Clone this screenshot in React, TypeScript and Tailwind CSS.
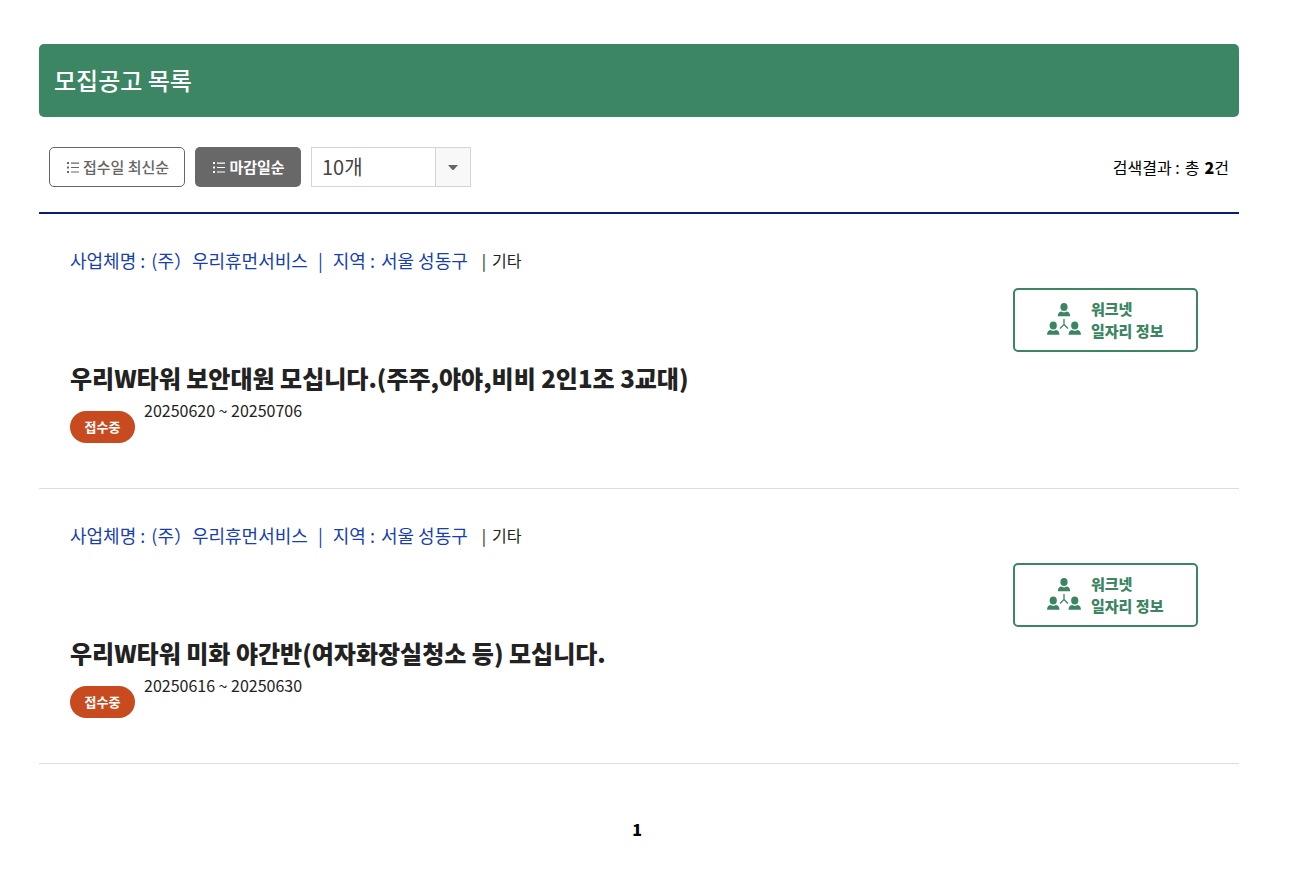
const font = "font-['Noto_Sans_CJK_KR',sans-serif]";

const jobs = [
  { title: "우리W타워 보안대원 모십니다.(주주,야야,비비 2인1조 3교대)", period: "20250620 ~ 20250706" },
  { title: "우리W타워 미화 야간반(여자화장실청소 등) 모십니다.", period: "20250616 ~ 20250630" },
];

function ListIcon() {
  return (
    <svg width="12" height="11" viewBox="0 0 12 11" fill="currentColor" aria-hidden="true">
      <path d="M0 0h2v2H0zM4 .5h8v1.200H4zM0 4.500h2v2H0zM4 4.900h8v1.200H4zM0 9h2v2H0zM4 9.400h8v1.200H4z" />
    </svg>
  );
}

function Person({ x, y }: { x: number; y: number }) {
  return (
    <g transform={`translate(${x} ${y})`}>
      <ellipse cx="6.250" cy="4" rx="3.600" ry="4" />
      <path d="M0 13.300c.2-2.800 1-4.300 3.500-4.800l2.750 1.100L9 8.500c2.500.5 3.300 2 3.500 4.800z" />
    </g>
  );
}

function NetworkIcon() {
  return (
    <svg width="34" height="34" viewBox="0 0 34 34" fill="#3b8562" aria-hidden="true">
      <Person x={10.75} y={0} />
      <Person x={0} y={18.5} />
      <Person x={21.5} y={18.5} />
      <path d="M17 16v5.500l-4 4m4-4l4 4" fill="none" stroke="#3b8562" strokeWidth="1.300" />
    </svg>
  );
}

function Field({ label, value }: { label: string; value: string }) {
  return (
    <span className="flex gap-1.5">
      <span>{label} :</span>
      <span>{value}</span>
    </span>
  );
}

export default function App() {
  return (
    <main className={`${font} mr-[75px] ml-[39px] pt-11 text-base text-[#222]`}>
      <h1 className="flex h-[73px] items-center rounded-[5px] bg-[#3d8664] px-[15px] pb-0.5 text-2xl font-medium text-white">모집공고 목록</h1>
      <div className="mt-[30px] flex h-[67px] items-start justify-between border-b-2 border-[#071d78] px-[10px]">
        <div className="flex gap-[10px]">
          <button className="flex h-10 w-[136px] items-center justify-center gap-1 rounded-[5px] border border-[#666] pl-0.5 text-[15px] font-medium text-[#666]">
            <ListIcon />접수일 최신순
          </button>
          <button className="flex h-10 w-[106px] items-center justify-center gap-1 rounded-[5px] bg-[#686868] pl-0.5 text-[15px] font-bold text-white">
            <ListIcon />마감일순
          </button>
          <div className="grid h-10 w-40 grid-cols-[1fr_35px] border border-[#d5d5d5]">
            <select aria-label="표시 개수" className="col-span-2 col-start-1 row-start-1 appearance-none bg-transparent px-[10px] text-xl text-[#444]">
              <option>10개</option>
            </select>
            <span className="pointer-events-none col-start-2 row-start-1 flex items-center justify-center border-l border-[#d5d5d5] bg-[#f8f8f8]">
              <svg width="10" height="5" viewBox="0 0 10 5" fill="#666" aria-hidden="true"><path d="M0 0h10L6 4.500Q5 5.500 4 4.500z" /></svg>
            </span>
          </div>
        </div>
        <p className="flex h-10 items-center gap-[5px] text-black">
          <span>검색결과 :</span>
          <span>총</span>
          <span><strong className="font-black">2</strong>건</span>
        </p>
      </div>
      <ul>
        {jobs.map((job) => (
          <li key={job.title} className="flex h-[275px] justify-between border-b border-[#ddd] pr-[41px] pl-[31px]">
            <div className="pt-[30px]">
              <p className="flex h-8 items-center gap-[14px]">
                <span className="flex gap-[10px] text-lg text-[#173fb0]">
                  <Field label="사업체명" value="(주）우리휴먼서비스" />
                  <span>|</span>
                  <Field label="지역" value="서울 성동구" />
                </span>
                <span className="flex gap-1.5"><span>|</span><span>기타</span></span>
              </p>
              <h2 className="mt-[82px] flex h-10 items-center text-2xl font-black">{job.title}</h2>
              <div className="flex items-end gap-[9px]">
                <span className="mt-[13px] flex h-8 w-[65px] items-center justify-center rounded-full bg-[#c84b20] text-[13px] font-bold text-white">접수중</span>
                <span className="self-start leading-6">{job.period}</span>
              </div>
            </div>
            <a href="#" className="mt-[74px] flex h-16 w-[185px] items-center gap-[10px] rounded-[5px] border-2 border-[#3b8562] pl-8 text-[15px] font-black leading-[22px] text-[#3b8562]">
              <NetworkIcon />
              <span>워크넷<br />일자리 정보</span>
            </a>
          </li>
        ))}
      </ul>
      <nav aria-label="페이지" className="mt-[53px] pr-1 text-center">
        <a href="#" aria-current="page" className="font-black text-black">1</a>
      </nav>
    </main>
  );
}
